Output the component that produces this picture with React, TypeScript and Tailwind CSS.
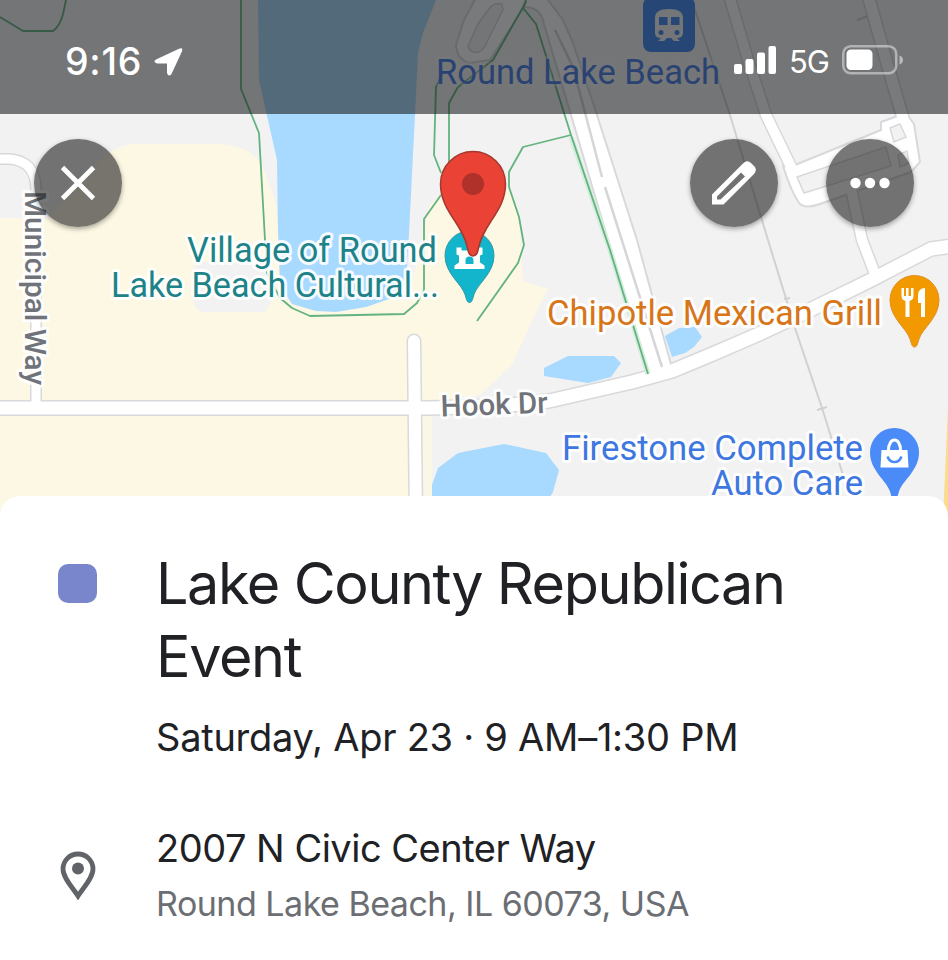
import React from "react";

type RoadProps = { d: string; w: number };

const Casing = ({ d, w }: RoadProps) => (
  <path d={d} fill="none" stroke="#d8d9dc" strokeWidth={w + 3} strokeLinejoin="round" strokeLinecap="round" />
);
const Surface = ({ d, w }: RoadProps) => (
  <path d={d} fill="none" stroke="#ffffff" strokeWidth={w} strokeLinejoin="round" strokeLinecap="round" />
);

const roads: RoadProps[] = [
  { d: "M-10 159H8Q36 160 36 190V405", w: 9 },
  { d: "M-10 408H430L500 406L549 401L632 382L672 371L715 353L759 334L812 309L869 281L931 249L960 245", w: 13 },
  { d: "M414 341L416 520", w: 12 },
  { d: "M729 -5L748 60L766 115L795 175", w: 10 },
  { d: "M868 -5L886 60L903 118", w: 11 },
  { d: "M852 193L862 240L875 274", w: 10 },
];

const paths = [
  "M0 17L23 31H53Q60 26 63 14L66 0",
  "M241 0V89L259 133L265 240L267 273L280 298L292 308L310 316L404 314L417 303L424 290V219L441 195",
  "M526 2L493 60L458 87L449 103V165",
  "M526 0L523 8L536 24L571 135L610 250L648 374",
  "M443 72L436 87L434 155L441 173",
  "M571 135L523 147L509 172V187L519 217L524 245L518 263L477 321",
];

type LabelProps = {
  x: number;
  y: number;
  len: number;
  color: string;
  size?: number;
  weight?: number;
  halo?: number;
  transform?: string;
  children: React.ReactNode;
};

const Label = ({ x, y, len, color, size = 35, weight = 400, halo = 0.9, transform, children }: LabelProps) => (
  <text
    x={x}
    y={y}
    textLength={len}
    lengthAdjust="spacingAndGlyphs"
    fontSize={size}
    fontWeight={weight}
    fill={color}
    stroke="#ffffff"
    strokeOpacity={halo}
    strokeWidth={6}
    strokeLinejoin="round"
    paintOrder="stroke"
    transform={transform}
    className="font-[Roboto,sans-serif]"
  >
    {children}
  </text>
);

const pinShape = "M0 47C-2.500 47 -3 44 -4.500 39C-8 28 -24.500 18 -24.500 0A24.500 24.500 0 0 1 24.500 0C24.500 18 8 28 4.500 39C3 44 2.500 47 0 47Z";

function MapCanvas() {
  return (
    <svg className="absolute inset-0 h-[520px] w-[948px]" viewBox="0 0 948 520">
      <rect width="948" height="520" fill="#f2f2f2" />
      {/* sand-coloured blocks */}
      <path
        d="M0 218H48L100 160Q115 145 135 144H215Q255 145 264 170L276 205L285 300H408L430 205L445 190H509L519 217L523 281L548 289L530 325L512 365L480 395L425 403V520H0Z"
        fill="#fdf8e3"
      />
      <path d="M195 262H272V300L265 312H203Q194 310 194 300Z" fill="#f2f2f2" />
      <path d="M421 414H432V520H421Z" fill="#fbf7e6" />
      {/* water */}
      <g fill="#a8d9ff">
        <path d="M258 0L259 80L277 160L278 230L280 285L292 304L316 311L336 312L366 307L395 297L406 285L409 233L415 115L418 53L423 33L436 0Z" />
        <path d="M544 368L568 356H614L621 363L611 377L588 383L544 376Z" />
        <path d="M432 520V485L438 468L458 453L504 444L546 453L559 470L553 492L535 520Z" />
        <path d="M665 336L679 328L695 327L702 337L694 347L685 353L672 357Z" />
      </g>
      {/* rail line */}
      <path d="M690 -5L730 115L768 240L795 328L822 408L843 475" fill="none" stroke="#d0d1d4" strokeWidth="2" />
      <path d="M817 410L827 407M784 299L790 298M857 20L868 16" stroke="#d0d1d4" strokeWidth="2" />
      {/* roads */}
      {roads.map((r) => (
        <Casing key={r.d} {...r} />
      ))}
      <path
        d="M477 -4L464 20L456 45Q457 60 470 63L490 60L524 7Q541 7 544 24L571 115L611 250L650 376L672 368L637 240L597 115L573 43L563 20L545 -4Z"
        fill="#fff"
        stroke="#d8d9dc"
        strokeWidth="2"
        strokeLinejoin="round"
      />
      <path
        d="M790 167L881 130V122L906 113L914 124L920 162L911 172L820 204Q806 209 800 204Q792 194 783 166Z"
        fill="#fff"
        stroke="#d8d9dc"
        strokeWidth="2"
        strokeLinejoin="round"
      />
      {roads.map((r) => (
        <Surface key={r.d} {...r} />
      ))}
      <g fill="#f2f2f2" stroke="#d8d9dc" strokeWidth="1.500">
        <path d="M502 4Q493 2 488 10L478 24L468 46Q470 54 479 52Q484 50 488 40L503 10Z" />
        <path d="M797 177L804 193L891 166L886 147Z" />
        <path d="M890 128L900 124L906 137L894 142Z" />
        <path d="M898 155L907 151L909 163L900 167Z" />
      </g>
      <path d="M555 30L573 67L602 177M605 187L662 367" fill="none" stroke="#d5d6d9" strokeWidth="2.500" />
      {/* walking trails */}
      <path d="M571 137L610 250L648 374" fill="none" stroke="#d4eedc" strokeWidth="5" />
      {paths.map((d) => (
        <path key={d} d={d} fill="none" stroke="#63b37f" strokeWidth="1.800" strokeLinejoin="round" />
      ))}
      <path d="M943 520L949 385V520Z" fill="#fbdc8b" />

      {/* street names */}
      <Label x={0} y={0} len={194} size={30} weight={500} color="#70747a" transform="translate(25 191) rotate(90)">
        Municipal Way
      </Label>
      <Label x={0} y={0} len={107} size={30} weight={500} color="#70747a" transform="translate(441 416.500) rotate(-2)">
        Hook Dr
      </Label>

      {/* places */}
      <Label x={436} y={83.5} len={284} color="#477bea" halo={0.3}>
        Round Lake Beach
      </Label>
      <Label x={187} y={262} len={250} color="#1d8388">Village of Round</Label>
      <Label x={111} y={297} len={328} color="#1d8388">Lake Beach Cultural...</Label>
      <Label x={547} y={324.5} len={335} color="#d77519">Chipotle Mexican Grill</Label>
      <Label x={562} y={459.5} len={301} color="#3d77df">Firestone Complete</Label>
      <Label x={711} y={494.5} len={152} color="#3d77df">Auto Care</Label>

      {/* train station */}
      <rect x="643" y="-3" width="52" height="55" rx="8" fill="#3c86f4" />
      <path d="M655 18Q655 9 669 9Q683 9 683 18V33Q683 38 677 38L680 41H674L671 38H667L664 41H658L661 38Q655 38 655 33Z" fill="#f2f2f2" />
      <path d="M659 17H667.500V25H659ZM671 17H679.500V25H671Z" fill="#3c86f4" />
      <circle cx="661" cy="32.500" r="2.500" fill="#3c86f4" />
      <circle cx="677" cy="32.500" r="2.500" fill="#3c86f4" />

      {/* museum pin */}
      <g transform="translate(469.500 255.500)">
        <path d={pinShape} fill="#12b5cb" stroke="#3798a5" strokeWidth="1" />
        <path
          fillRule="evenodd"
          d="M-13 -8H-8V-5H8V-8H13V-1L10.500 0V7L15 10V13.500H-15V10L-10.500 7V0L-13 -1ZM-4 8.500H4V5A4 4 0 0 0 -4 5Z"
          fill="#fff"
        />
      </g>
      {/* restaurant pin */}
      <g transform="translate(914.500 300)">
        <path d={pinShape} fill="#f29900" stroke="#e0902a" strokeWidth="1" />
        <path
          d="M-13 -12H-10.500V-4H-8.500V-12H-6V-4H-3.500V-12H-1V-4Q-1 0 -5 1V17H-9V1Q-13 0 -13 -4ZM10.500 -12V17H6.500V3H3.500V-5Q4 -12 10.500 -12Z"
          fill="#fff"
        />
      </g>
      {/* shop pin */}
      <g transform="translate(894.500 452.500)">
        <path d={pinShape} fill="#4b8bf8" />
        <path d="M-13 -2.500H13L14 15H-14Z" fill="#fff" />
        <path d="M-6 -2C-6 -16 6 -16 6 -2" fill="none" stroke="#fff" strokeWidth="3" />
        <path d="M-7 4Q-5 9.500 0 9.500Q5 9.500 7 4" fill="none" stroke="#4b8bf8" strokeWidth="2.500" />
      </g>
      {/* event location */}
      <path
        d="M473 256C469.500 256 468.500 253 467.500 248C463 224 440.500 211 440.500 184A32.500 32.500 0 0 1 505.500 184C505.500 211 483 224 478.500 248C477.500 253 476.500 256 473 256Z"
        fill="#ea4335"
        stroke="#a5382f"
        strokeWidth="1.500"
      />
      <circle cx="473" cy="184" r="11" fill="#b0302a" />
    </svg>
  );
}

function StatusBar() {
  return (
    <div className="relative flex h-[114px] items-start justify-between bg-[#17191b]/58 pt-[42px] pr-[44px] pl-[65px] font-[Inter,sans-serif] text-white">
      <div className="flex h-10 items-center gap-[10px]">
        <span className="w-[78px] text-[37.500px] leading-10 font-medium tracking-[0.700px]">9:16</span>
        <svg className="h-[30px] w-[31px]" viewBox="0 0 31 30">
          <path
            d="M3 12.500L26 1.700Q30.500 0 28.900 4.500L18.500 27Q15.500 30.500 14 26V16.500H4Q-.5 15 3 12.500Z"
            fill="currentColor"
          />
        </svg>
      </div>
      <div className="flex h-10 items-center">
        <svg className="-mt-1 h-7 w-[42px]" viewBox="0 0 42 28" fill="currentColor">
          <rect x="0" y="18" width="8" height="10" rx="2" />
          <rect x="11.500" y="13" width="8" height="15" rx="2" />
          <rect x="23" y="6.500" width="8" height="21.500" rx="2" />
          <rect x="34.500" y="0" width="7.500" height="28" rx="2" />
        </svg>
        <span className="ml-[13px] w-[41px] text-[31px] leading-10 tracking-[-1px]">5G</span>
        <svg className="-mt-1 ml-[12px] h-[30px] w-[62px]" viewBox="0 0 62 30">
          <rect x="1.250" y="1.250" width="53" height="27" rx="7.500" fill="none" stroke="#fff" strokeOpacity=".45" strokeWidth="2.500" />
          <rect x="4.500" y="4.500" width="26" height="20.500" rx="4.500" fill="#fff" />
          <path d="M57.500 10.500Q61 12 61 15T57.500 19.500Z" fill="#fff" fillOpacity=".5" />
        </svg>
      </div>
    </div>
  );
}

function RoundButton({ label, children }: { label: string; children: React.ReactNode }) {
  return (
    <button
      aria-label={label}
      className="flex size-[88px] items-center justify-center rounded-full bg-[#1c1c1c]/60 text-white shadow-[0_2px_5px_rgba(0,0,0,0.35)]"
    >
      {children}
    </button>
  );
}

function Toolbar() {
  return (
    <div className="relative flex items-center justify-between pt-[24.500px] pr-[34px] pl-[34px]">
      <RoundButton label="Close">
        <svg className="size-9" viewBox="0 0 36 36">
          <path d="M2.500 2.500L33.500 33.500M33.500 2.500L2.500 33.500" stroke="currentColor" strokeWidth="4.800" />
        </svg>
      </RoundButton>
      <div className="flex gap-12">
        <RoundButton label="Edit">
          <svg className="size-[46px]" viewBox="0 0 46 46">
            <path
              fillRule="evenodd"
              d="M1 34.500L32 3.500Q36 -.5 40 3L43.500 6.500Q46.500 10 43 14L12.500 44.500H1ZM6 36.500V39.500H9.500L34 16.500L30 12.500Z"
              fill="currentColor"
            />
          </svg>
        </RoundButton>
        <RoundButton label="More options">
          <svg className="h-3 w-10" viewBox="0 0 40 12" fill="currentColor">
            <circle cx="5.500" cy="6" r="5.200" />
            <circle cx="20" cy="6" r="5.200" />
            <circle cx="34.500" cy="6" r="5.200" />
          </svg>
        </RoundButton>
      </div>
    </div>
  );
}

export default function App() {
  return (
    <div className="flex h-[960px] w-[948px] flex-col overflow-hidden bg-white">
      <header className="relative h-[520px] shrink-0">
        <MapCanvas />
        <StatusBar />
        <Toolbar />
      </header>
      <main className="relative -mt-6 flex flex-1 flex-col rounded-t-[20px] bg-white font-[Inter,sans-serif] text-[#202124]">
        <section className="flex pt-[51px] pl-[58px]">
          <div className="mt-[17px] size-[39px] shrink-0 rounded-[10px] bg-[#7986cb]" />
          <div className="ml-[59px]">
            <h1 className="text-[57.500px] leading-[73px] tracking-[-1.400px] whitespace-nowrap">
              Lake County Republican
              <br />
              Event
            </h1>
            <p className="mt-[21.500px] text-[38px] leading-[44px] tracking-[-0.250px] whitespace-nowrap">
              Saturday, Apr 23 · 9 AM–1:30 PM
            </p>
          </div>
        </section>
        <section className="flex items-center pt-[61px] pl-[60px]">
          <svg className="h-[49px] w-[36px] shrink-0" viewBox="0 0 36 49">
            <path
              d="M18 45C13 37 3 27 3 18A15 15 0 0 1 33 18C33 27 23 37 18 45Z"
              fill="none"
              stroke="#606367"
              strokeWidth="4.800"
            />
            <circle cx="18" cy="17.500" r="6" fill="#606367" />
          </svg>
          <div className="ml-[60px] whitespace-nowrap">
            <p className="text-[38px] leading-[56px] tracking-[-0.500px]">2007 N Civic Center Way</p>
            <p className="text-[34px] leading-[56px] tracking-[-0.500px] text-[#6b6e73]">Round Lake Beach, IL 60073, USA</p>
          </div>
        </section>
      </main>
    </div>
  );
}
